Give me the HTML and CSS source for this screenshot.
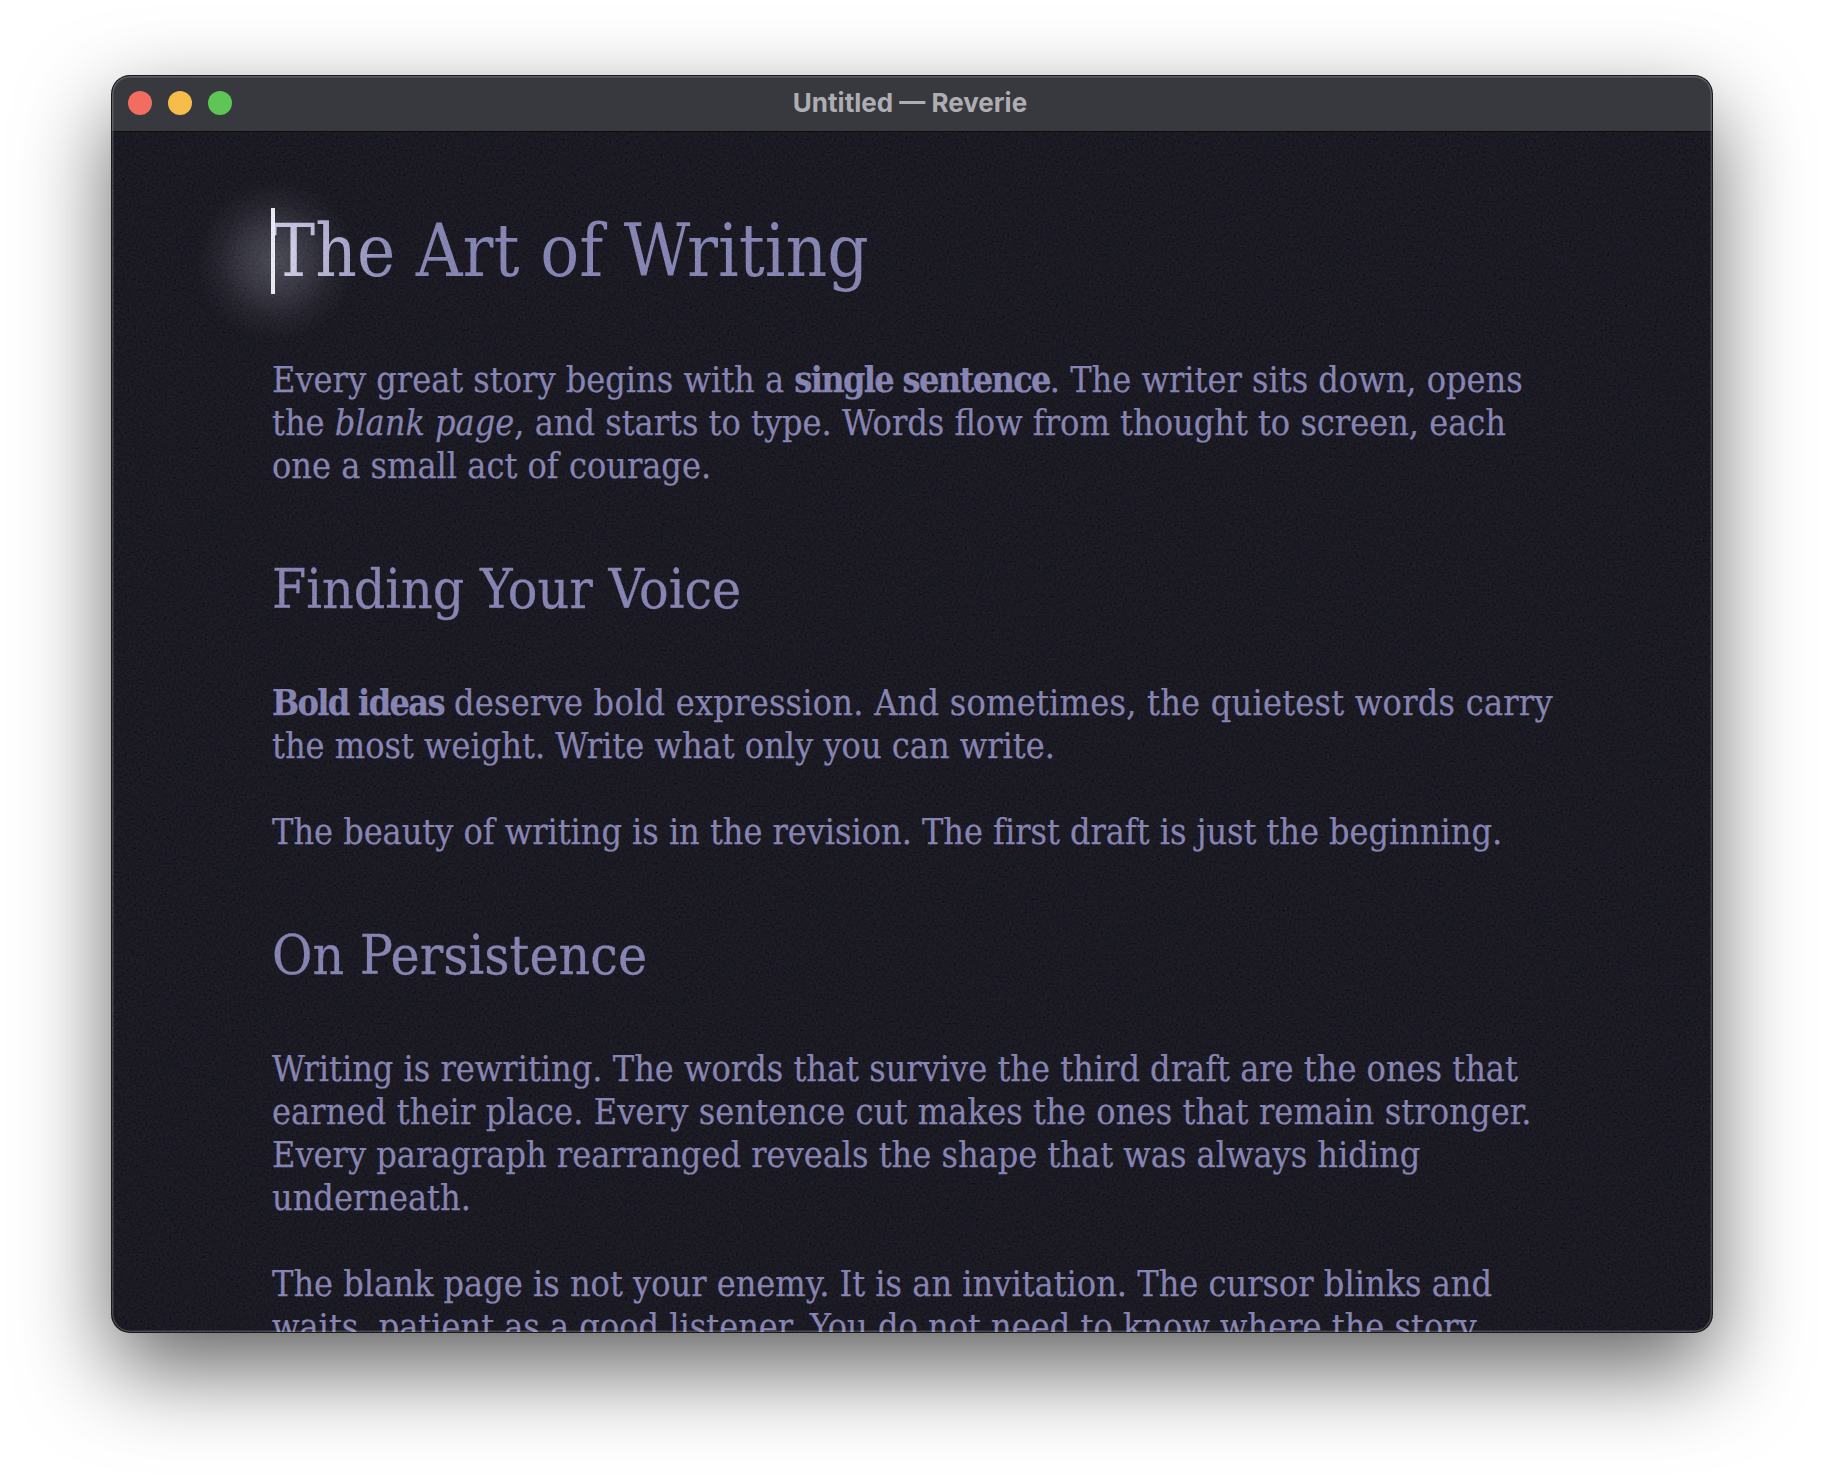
FILE: index.html
```html
<!DOCTYPE html>
<html lang="en">
<head>
<meta charset="utf-8">
<title>Untitled — Reverie</title>
<link rel="stylesheet" href="styles.css">
</head>
<body>
<main class="window">
  <header class="titlebar">
    <div class="lights">
      <span class="light red"></span>
      <span class="light yellow"></span>
      <span class="light green"></span>
    </div>
    <div class="title">Untitled — Reverie</div>
    <div class="spacer"></div>
  </header>
  <section class="editor">
    <h1 class="doc-title">The Art of Writing</h1>
    <p class="para first">Every great story begins with a <strong>single sentence</strong>. The writer sits down, opens<br>the <em>blank page</em>, and starts to type. Words flow from thought to screen, each<br>one a small act of courage.</p>
    <h2 class="head">Finding Your Voice</h2>
    <p class="para after-head"><strong>Bold ideas</strong> <span class="wider">deserve bold expression. And sometimes, the quietest words carry</span><br>the most weight. Write what only you can write.</p>
    <p class="para"><span class="tight">The beauty of writing is in the revision. The first draft is just the beginning.</span></p>
    <h2 class="head">On Persistence</h2>
    <p class="para after-head">Writing is rewriting. The words that survive the third draft are the ones that<br><span class="wide">earned their place. Every sentence cut makes the ones that remain stronger.</span><br>Every paragraph rearranged reveals the shape that was always hiding<br>underneath.</p>
    <p class="para">The blank page is not your enemy. It is an invitation. The cursor blinks and<br>waits, patient as a good listener. You do not need to know where the story</p>
    <div class="glow"></div>
    <div class="caret"></div>
    <svg class="grain" aria-hidden="true">
      <filter id="noise" x="0" y="0" width="100%" height="100%"><feTurbulence type="fractalNoise" baseFrequency="0.45" numOctaves="2" seed="4"/><feColorMatrix type="matrix" values="1.6 0 0 0 -0.3  0 1.6 0 0 -0.3  0 0 1.6 0 -0.3  0 0 0 0 1"/></filter>
      <rect width="100%" height="100%" filter="url(#noise)"/>
    </svg>
  </section>
</main>
</body>
</html>
```
FILE: styles.css
```css
* { box-sizing: border-box; }
html, body { margin: 0; height: 100%; }
body {
  background: #ffffff;
  padding: 76px 112px 0;
  overflow: hidden;
}
.window {
  position: relative;
  width: 1600px;
  height: 1256px;
  border-radius: 18px;
  overflow: hidden;
  display: flex;
  flex-direction: column;
  background: #090812;
  box-shadow: 0 0 0 1px #1a1a1c, 0 36px 90px rgba(0,0,0,.62);
}
.window::after {
  content: "";
  position: absolute;
  inset: 0;
  border-radius: 18px;
  box-shadow: inset 0 0 0 1.5px rgba(255,255,255,.2);
  pointer-events: none;
}
.titlebar {
  flex: none;
  height: 56px;
  display: grid;
  grid-template-columns: 1fr auto 1fr;
  align-items: center;
  padding: 0 16px 1px;
  background: #38393e;
  border-bottom: 1.5px solid #0e0e10;
}
.lights { display: flex; gap: 16px; }
.light { width: 24px; height: 24px; border-radius: 50%; }
.red { background: #f26d60; }
.yellow { background: #f6bd4b; }
.green { background: #5dc655; }
.title {
  font: 700 26px/1 Inter, "Liberation Sans", sans-serif;
  color: #aeaeb2;
  position: relative;
  left: -2px;
}
.editor {
  position: relative;
  flex: 1;
  min-height: 0;
  overflow: hidden;
  padding: 83px 0 0 160px;
  background: #090812;
  font-family: "DejaVu Serif Condensed", "DejaVu Serif", serif;
  color: #817fb2;
  white-space: nowrap;
}
.doc-title {
  margin: 0;
  padding-bottom: 16px;
  font-size: 72px;
  line-height: 72px;
  font-weight: 400;
  background: radial-gradient(circle 125px at 0 40px, #d6d6ee 0%, #817fb2 100%);
  -webkit-background-clip: text;
  background-clip: text;
  color: transparent;
}
.para {
  margin: 43px 0 0;
  font-size: 35.7px;
  line-height: 43px;
  -webkit-text-stroke: .25px #817fb2;
}
.para.first { margin-top: 55px; }
.para.after-head { margin-top: 63px; }
.head {
  margin: 73px 0 0;
  font-size: 54.8px;
  line-height: 58px;
  font-weight: 400;
  -webkit-text-stroke: .3px #817fb2;
}
.para strong { font-weight: 700; letter-spacing: -1.65px; }
.para em { font-style: italic; }
.wide { letter-spacing: .11px; }
.wider { letter-spacing: .24px; }
.tight { letter-spacing: -.04px; }
.caret {
  position: absolute;
  left: 159px;
  top: 76px;
  width: 4px;
  height: 86px;
  background: #eeeef8;
}
.glow {
  position: absolute;
  left: 84px;
  top: 48px;
  width: 160px;
  height: 160px;
  border-radius: 50%;
  background: radial-gradient(closest-side, rgba(235,235,255,.24) 0%, rgba(235,235,255,.15) 40%, rgba(235,235,255,.05) 72%, rgba(235,235,255,0) 100%);
}
.grain {
  position: absolute;
  inset: 0;
  width: 100%;
  height: 100%;
  opacity: .1;
  pointer-events: none;
}
```
